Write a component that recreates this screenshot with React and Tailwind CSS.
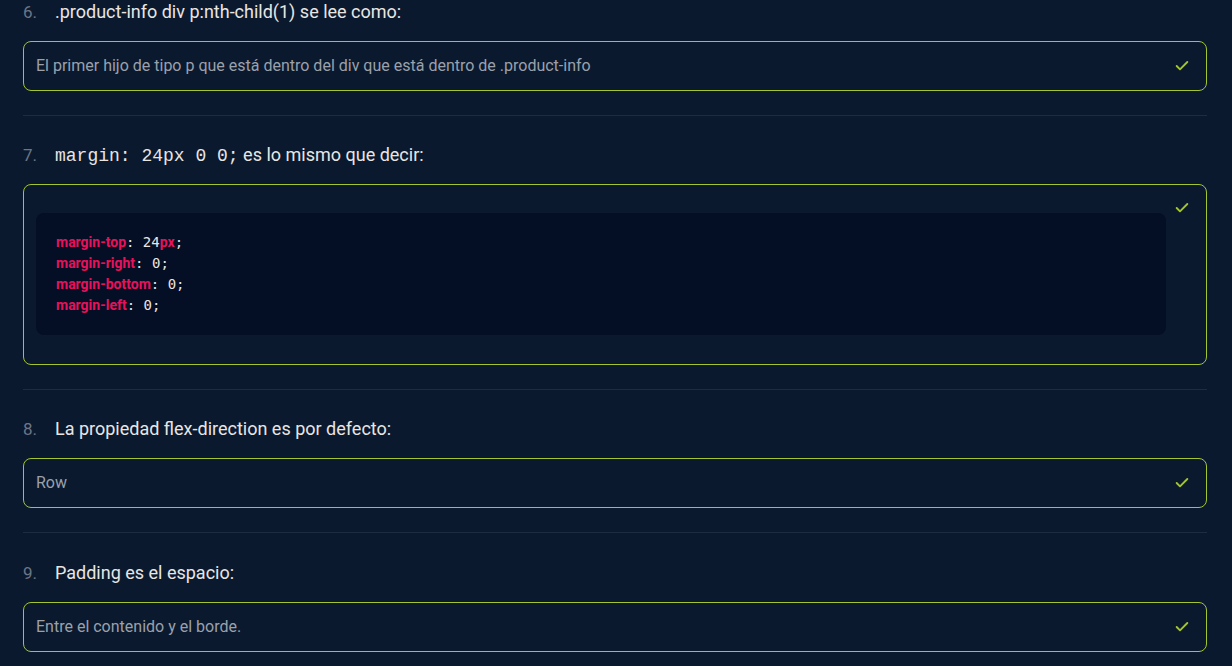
import React from "react";

const Check = () => (
  <svg width="16" height="16" viewBox="0 0 24 24" fill="none" stroke="#a3c52f" strokeWidth="2.8" strokeLinecap="round" strokeLinejoin="round" className="shrink-0">
    <path d="M20 6 9 17l-5-5" />
  </svg>
);

const Question = ({ n, children, first }) => (
  <div className={`flex items-baseline h-7 pt-[1px] text-[18px] ${first ? "-mt-[3px]" : ""}`}>
    <span className="w-8 text-[#6b7686] text-[17px]">{n}.</span>
    <span className="text-[#e8e6e3]">{children}</span>
  </div>
);

const Answer = ({ children }) => (
  <div className="mt-4 flex items-center h-[50px] rounded-lg border border-[#a3c52f] pl-3 pr-4">
    <span className="flex-1 text-[16px] text-[#9aa1ab]">{children}</span>
    <Check />
  </div>
);

const Prop = ({ children }) => (
  <span className="font-bold text-[#e8125c]" style={{ fontFamily: "Roboto, sans-serif" }}>{children}</span>
);

const mono = { fontFamily: '"DejaVu Sans Mono", monospace' };

export default function App() {
  return (
    <div className="bg-[#0b192f] pl-[23px] pr-[25px] overflow-hidden h-[666px]" style={{ fontFamily: "Roboto, 'Liberation Sans', sans-serif" }}>
      <div className="pb-6 border-b border-[#1e2c40]">
        <Question n={6} first>.product-info div p:nth-child(1) se lee como:</Question>
        <Answer>El primer hijo de tipo p que está dentro del div que está dentro de .product-info</Answer>
      </div>

      <div className="pt-[24px] pb-6 border-b border-[#1e2c40]">
        <Question n={7}>
          <span className="text-[18px]" style={{ fontFamily: '"Liberation Mono", monospace' }}>margin: 24px 0 0;</span> es lo mismo que decir:
        </Question>
        <div className="mt-4 flex items-start gap-2 rounded-lg border border-[#a3c52f] pl-3 pr-4 pt-[28px] pb-[29px]">
          <div className="flex-1 rounded-lg bg-[#040e24] px-5 py-[19px] text-[14px] leading-[21px] text-[#e8e6e3]">
            <div><Prop>margin-top</Prop><span style={mono}>: 24</span><Prop>px</Prop><span style={mono}>;</span></div>
            <div><Prop>margin-right</Prop><span style={mono}>: 0;</span></div>
            <div><Prop>margin-bottom</Prop><span style={mono}>: 0;</span></div>
            <div><Prop>margin-left</Prop><span style={mono}>: 0;</span></div>
          </div>
          <div className="-mt-[13px]"><Check /></div>
        </div>
      </div>

      <div className="pt-[24px] pb-6 border-b border-[#1e2c40]">
        <Question n={8}>La propiedad flex-direction es por defecto:</Question>
        <Answer>Row</Answer>
      </div>

      <div className="pt-[25px] pb-6">
        <Question n={9}>Padding es el espacio:</Question>
        <Answer>Entre el contenido y el borde.</Answer>
      </div>
    </div>
  );
}
